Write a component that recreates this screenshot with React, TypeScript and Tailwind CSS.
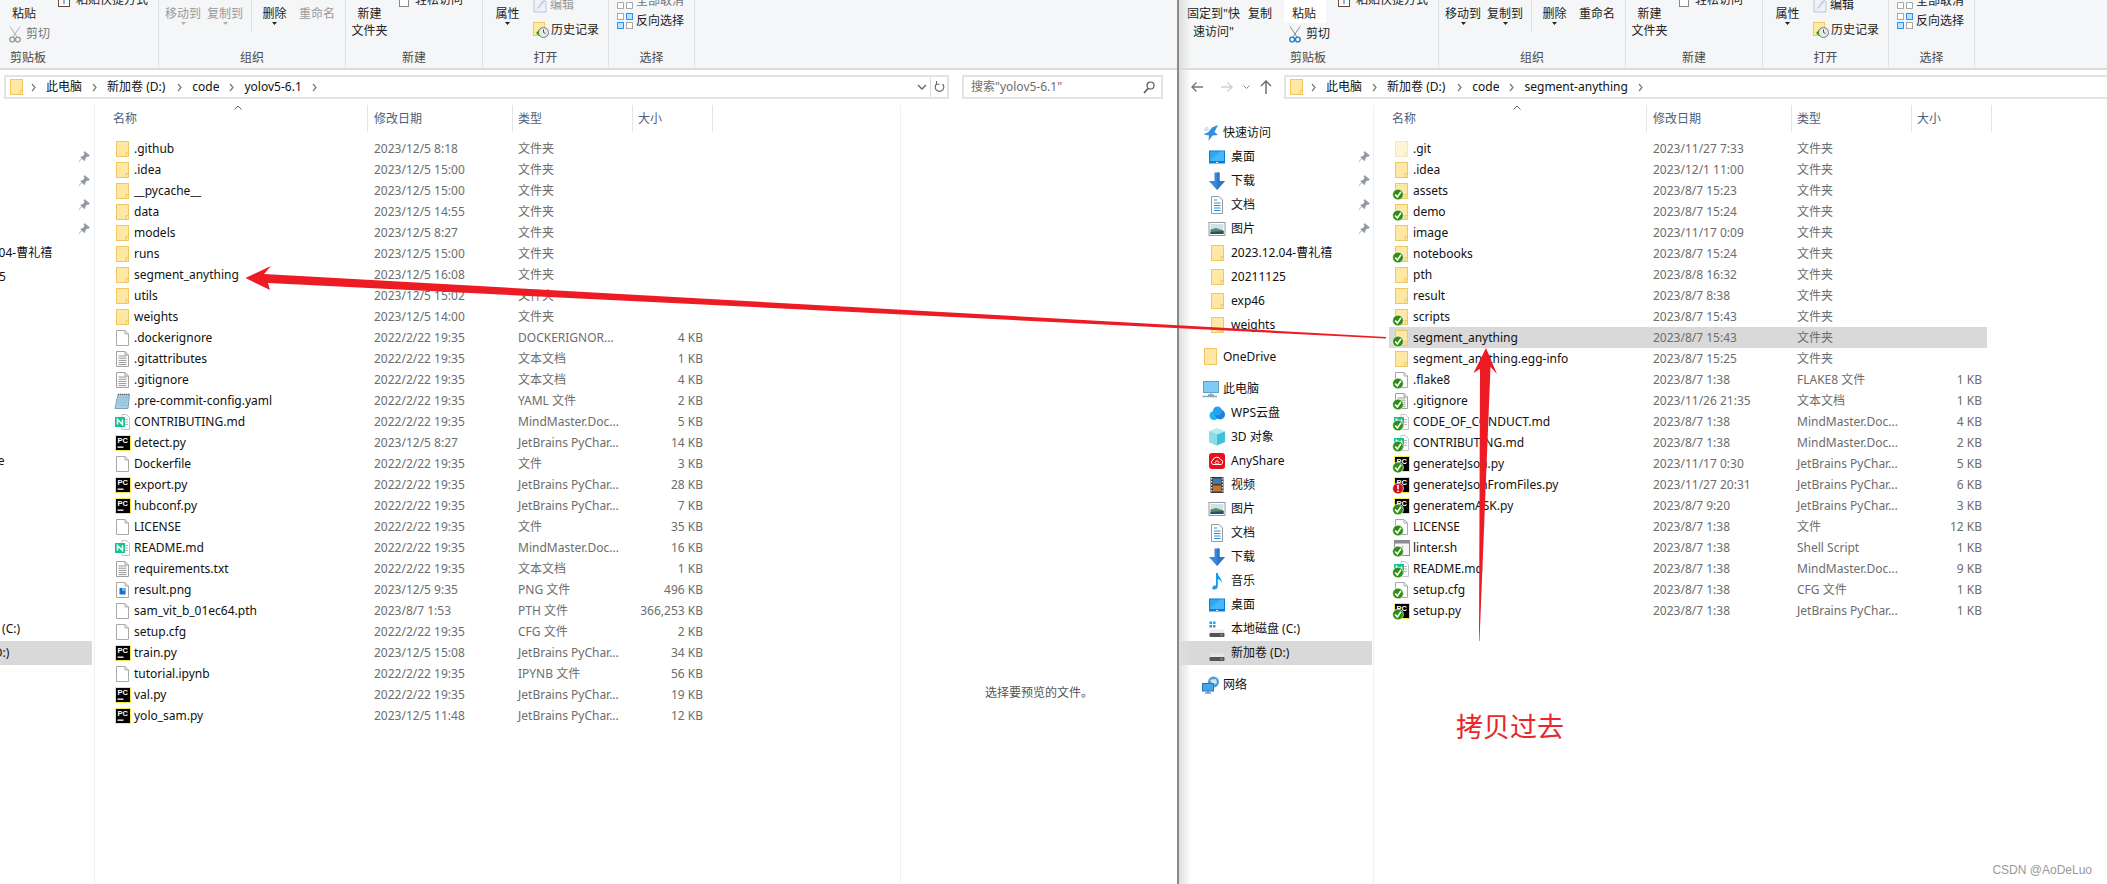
import React from "react";

type Row = { n: string; d: string; t: string; s?: string; i: string; b?: "c" | "x"; sel?: boolean };

const F = "文件夹";
const PY = "JetBrains PyChar...";
const MM = "MindMaster.Doc...";
const TX = "文本文档";

const leftRows: Row[] = [
  { n: ".github", d: "2023/12/5 8:18", t: F, i: "folder" },
  { n: ".idea", d: "2023/12/5 15:00", t: F, i: "folder" },
  { n: "__pycache__", d: "2023/12/5 15:00", t: F, i: "folder" },
  { n: "data", d: "2023/12/5 14:55", t: F, i: "folder" },
  { n: "models", d: "2023/12/5 8:27", t: F, i: "folder" },
  { n: "runs", d: "2023/12/5 15:00", t: F, i: "folder" },
  { n: "segment_anything", d: "2023/12/5 16:08", t: F, i: "folder" },
  { n: "utils", d: "2023/12/5 15:02", t: F, i: "folder" },
  { n: "weights", d: "2023/12/5 14:00", t: F, i: "folder" },
  { n: ".dockerignore", d: "2022/2/22 19:35", t: "DOCKERIGNOR...", s: "4 KB", i: "file" },
  { n: ".gitattributes", d: "2022/2/22 19:35", t: TX, s: "1 KB", i: "text" },
  { n: ".gitignore", d: "2022/2/22 19:35", t: TX, s: "4 KB", i: "text" },
  { n: ".pre-commit-config.yaml", d: "2022/2/22 19:35", t: "YAML 文件", s: "2 KB", i: "yaml" },
  { n: "CONTRIBUTING.md", d: "2022/2/22 19:35", t: MM, s: "5 KB", i: "mm" },
  { n: "detect.py", d: "2023/12/5 8:27", t: PY, s: "14 KB", i: "pc" },
  { n: "Dockerfile", d: "2022/2/22 19:35", t: "文件", s: "3 KB", i: "file" },
  { n: "export.py", d: "2022/2/22 19:35", t: PY, s: "28 KB", i: "pc" },
  { n: "hubconf.py", d: "2022/2/22 19:35", t: PY, s: "7 KB", i: "pc" },
  { n: "LICENSE", d: "2022/2/22 19:35", t: "文件", s: "35 KB", i: "file" },
  { n: "README.md", d: "2022/2/22 19:35", t: MM, s: "16 KB", i: "mm" },
  { n: "requirements.txt", d: "2022/2/22 19:35", t: TX, s: "1 KB", i: "text" },
  { n: "result.png", d: "2023/12/5 9:35", t: "PNG 文件", s: "496 KB", i: "png" },
  { n: "sam_vit_b_01ec64.pth", d: "2023/8/7 1:53", t: "PTH 文件", s: "366,253 KB", i: "file" },
  { n: "setup.cfg", d: "2022/2/22 19:35", t: "CFG 文件", s: "2 KB", i: "file" },
  { n: "train.py", d: "2023/12/5 15:08", t: PY, s: "34 KB", i: "pc" },
  { n: "tutorial.ipynb", d: "2022/2/22 19:35", t: "IPYNB 文件", s: "56 KB", i: "file" },
  { n: "val.py", d: "2022/2/22 19:35", t: PY, s: "19 KB", i: "pc" },
  { n: "yolo_sam.py", d: "2023/12/5 11:48", t: PY, s: "12 KB", i: "pc" },
];

const rightRows: Row[] = [
  { n: ".git", d: "2023/11/27 7:33", t: F, i: "folderfade" },
  { n: ".idea", d: "2023/12/1 11:00", t: F, i: "folder" },
  { n: "assets", d: "2023/8/7 15:23", t: F, i: "folder", b: "c" },
  { n: "demo", d: "2023/8/7 15:24", t: F, i: "folder", b: "c" },
  { n: "image", d: "2023/11/17 0:09", t: F, i: "folder" },
  { n: "notebooks", d: "2023/8/7 15:24", t: F, i: "folder", b: "c" },
  { n: "pth", d: "2023/8/8 16:32", t: F, i: "folder" },
  { n: "result", d: "2023/8/7 8:38", t: F, i: "folder" },
  { n: "scripts", d: "2023/8/7 15:43", t: F, i: "folder", b: "c" },
  { n: "segment_anything", d: "2023/8/7 15:43", t: F, i: "folder", b: "c", sel: true },
  { n: "segment_anything.egg-info", d: "2023/8/7 15:25", t: F, i: "folder" },
  { n: ".flake8", d: "2023/8/7 1:38", t: "FLAKE8 文件", s: "1 KB", i: "file", b: "c" },
  { n: ".gitignore", d: "2023/11/26 21:35", t: TX, s: "1 KB", i: "text", b: "c" },
  { n: "CODE_OF_CONDUCT.md", d: "2023/8/7 1:38", t: MM, s: "4 KB", i: "mm", b: "c" },
  { n: "CONTRIBUTING.md", d: "2023/8/7 1:38", t: MM, s: "2 KB", i: "mm", b: "c" },
  { n: "generateJson.py", d: "2023/11/17 0:30", t: PY, s: "5 KB", i: "pc", b: "c" },
  { n: "generateJsonFromFiles.py", d: "2023/11/27 20:31", t: PY, s: "6 KB", i: "pc", b: "x" },
  { n: "generatemASK.py", d: "2023/8/7 9:20", t: PY, s: "3 KB", i: "pc", b: "c" },
  { n: "LICENSE", d: "2023/8/7 1:38", t: "文件", s: "12 KB", i: "file", b: "c" },
  { n: "linter.sh", d: "2023/8/7 1:38", t: "Shell Script", s: "1 KB", i: "sh", b: "c" },
  { n: "README.md", d: "2023/8/7 1:38", t: MM, s: "9 KB", i: "mm", b: "c" },
  { n: "setup.cfg", d: "2023/8/7 1:38", t: "CFG 文件", s: "1 KB", i: "file", b: "c" },
  { n: "setup.py", d: "2023/8/7 1:38", t: PY, s: "1 KB", i: "pc", b: "c" },
];

const PAGE = "M2.5 1.5H11L14.5 5V16.5H2.5Z M11 1.5V5H14.5";

function FileGlyph({ i }: { i: string }) {
  switch (i) {
    case "folder":
    case "folderfade":
      return (
        <g opacity={i === "folderfade" ? 0.45 : 1}>
          <rect x="2.5" y="1.5" width="12" height="15" fill="#ffe8a3" stroke="#efc862" />
          <path d="M12 16V12.5H14.5" fill="none" stroke="#efc862" />
        </g>
      );
    case "file":
      return <path d={PAGE} fill="#fff" stroke="#a9a9a9" />;
    case "text":
      return (
        <g>
          <path d={PAGE} fill="#fff" stroke="#a0a0a0" />
          <path d="M4.5 6H12.5M4.5 8.2H12.5M4.5 10.4H12.5M4.5 12.6H12.5M4.5 14.6H12.5" stroke="#8a8a8a" strokeWidth="0.9" />
        </g>
      );
    case "yaml":
      return (
        <g>
          <path d="M4 2.5H15.5L14 16.5H1Z" fill="#a8d0e6" stroke="#7f9fb4" />
          <path d="M5 5.5H14M4.7 8H13.7M4.4 10.5H13.4M4.1 13H13.1" stroke="#8bb5cc" strokeWidth="0.8" />
          <path d="M4.5 1.5V3.5M6.5 1.5V3.5M8.5 1.5V3.5M10.5 1.5V3.5M12.5 1.5V3.5M14.5 1.5V3.5" stroke="#666" strokeWidth="0.7" />
        </g>
      );
    case "mm":
      return (
        <g>
          <path d="M8 1.5H12.5L15.5 4.5V16.5H8Z" fill="#fff" stroke="#c5c5c5" />
          <path d="M11 6.5H14M11 9H14M11 11.5H14" stroke="#b5b5b5" />
          <rect x="1" y="4" width="10" height="10" fill="#16c28e" />
          <path d="M3.5 11.5V6.5L8.5 11.5V6.5" fill="none" stroke="#fff" strokeWidth="1.5" />
        </g>
      );
    case "pc":
      return (
        <g>
          <rect x="1.5" y="1.5" width="15" height="15" fill="#000" stroke="#f4ec4e" />
          <text x="3.5" y="9" fontSize="7.5" fontWeight="700" fill="#fff" fontFamily="Liberation Sans, sans-serif">PC</text>
          <rect x="3.5" y="12.5" width="6" height="1.3" fill="#fff" />
        </g>
      );
    case "png":
      return (
        <g>
          <path d={PAGE} fill="#fff" stroke="#a9a9a9" />
          <rect x="5.5" y="7" width="6" height="6.5" fill="#1f6fc0" />
          <rect x="8" y="7" width="3.5" height="3" fill="#69b7ea" />
        </g>
      );
    case "sh":
      return (
        <g>
          <rect x="1.5" y="1.5" width="15" height="15" fill="#f5f5f5" stroke="#8d8d8d" />
          <rect x="1.5" y="1.5" width="15" height="3" fill="#8d8d8d" />
          <path d="M5 8L10 13M10 7L7 13" stroke="#9a9a9a" />
        </g>
      );
  }
  return null;
}

function FileIcon({ i, b }: { i: string; b?: "c" | "x" }) {
  return (
    <svg width="18" height="18" viewBox="0 0 18 18" className="shrink-0 overflow-visible">
      <FileGlyph i={i} />
      {b === "c" && (
        <g>
          <circle cx="5" cy="12.5" r="5.4" fill="#2f8f14" stroke="#fff" strokeWidth="0.7" />
          <path d="M2.2 12.5L4.4 15L8 9.8" fill="none" stroke="#fff" strokeWidth="1.6" />
        </g>
      )}
      {b === "x" && (
        <g>
          <circle cx="5" cy="12.5" r="5.4" fill="#c8141c" stroke="#fff" strokeWidth="0.7" />
          <path d="M5 8.8V13.2M5 14.4V16" stroke="#fff" strokeWidth="1.6" />
        </g>
      )}
    </svg>
  );
}

function NavIcon({ i }: { i: string }) {
  const p = { width: 18, height: 18, viewBox: "0 0 18 18", className: "shrink-0" };
  switch (i) {
    case "star":
      return (
        <svg {...p}>
          <path d="M16 1L12.5 8L16 11L10.5 11.5L6.5 17L7 11.5L1.5 10.5L6.5 8L10 3.5Z" fill="#2f8ee0" />
          <path d="M7 6H2M6 4H3" stroke="#9ccbee" />
        </svg>
      );
    case "desk":
      return (
        <svg {...p}>
          <rect x="1" y="2.5" width="16" height="13" fill="#0a7bd8" />
          <path d="M2 3.5H16V13L2 13Z" fill="#2fa8f5" />
          <path d="M2 13L12 3.5H16V13Z" fill="#45b9fb" />
          <path d="M8 14.5H10" stroke="#fff" />
        </svg>
      );
    case "down":
      return (
        <svg {...p}>
          <path d="M6.5 0.5H11.5V9H17L9 18L1 9H6.5Z" fill="#3a87dc" />
          <path d="M9 0.5H11.5V9H17L9 18Z" fill="#2f76c9" />
        </svg>
      );
    case "doc":
      return (
        <svg {...p}>
          <path d="M3.5 0.5H11L14.5 4V17.5H3.5Z" fill="#fff" stroke="#9a9a9a" />
          <path d="M6 4H9M6 7H12.5M6 9.5H12.5M6 12H12.5M6 14.5H12.5" stroke="#2b8fd6" strokeWidth="1.1" />
        </svg>
      );
    case "pic":
      return (
        <svg {...p}>
          <rect x="1" y="2.5" width="16" height="13" fill="#fff" stroke="#9a9a9a" />
          <rect x="2.5" y="4" width="13" height="10" fill="#cfe3ef" />
          <path d="M2.5 9.5L8 8L15.5 10.5V14H2.5Z" fill="#5d8a68" />
          <path d="M2.5 12L15.5 11V14H2.5Z" fill="#24506b" />
        </svg>
      );
    case "folder":
      return (
        <svg {...p}>
          <rect x="3.5" y="1.5" width="12" height="15" fill="#ffe8a3" stroke="#efc862" />
          <path d="M13 16V12.5H15.5" fill="none" stroke="#efc862" />
        </svg>
      );
    case "one":
      return (
        <svg {...p}>
          <rect x="2.5" y="0.5" width="12" height="16" fill="#ffe8a3" stroke="#efc862" />
        </svg>
      );
    case "pc":
      return (
        <svg {...p}>
          <rect x="1.5" y="1.5" width="15" height="11" fill="#7ecbf5" stroke="#6a9cc0" />
          <path d="M6 15H12M9 13V15M0.5 16.5H15" stroke="#8aa6bb" strokeWidth="1.3" />
        </svg>
      );
    case "wps":
      return (
        <svg {...p}>
          <circle cx="6" cy="11.5" r="4.5" fill="#21b4e8" />
          <circle cx="12" cy="10.5" r="5" fill="#1f7fe0" />
          <circle cx="9.5" cy="7" r="4.5" fill="#25a0ee" />
        </svg>
      );
    case "cube":
      return (
        <svg {...p}>
          <path d="M9 0.5L17 3.5V14L9 17.5L1 14V3.5Z" fill="#42c0d6" />
          <path d="M9 0.5L17 3.5L9 6.5L1 3.5Z" fill="#b4ecf2" />
          <path d="M1 3.5L9 6.5V17.5L1 14Z" fill="#8bdde8" />
        </svg>
      );
    case "any":
      return (
        <svg {...p}>
          <rect x="1" y="1" width="16" height="16" rx="3" fill="#e8101d" />
          <path d="M5 12.5A2.4 2.4 0 0 1 5 8A4 4 0 0 1 12.5 7.5A2.6 2.6 0 0 1 13 12.5ZM7 10.5L9 8.5L11 10.5L9 12.5Z" fill="none" stroke="#fff" strokeWidth="1" />
        </svg>
      );
    case "video":
      return (
        <svg {...p}>
          <rect x="2.5" y="1" width="13" height="16" fill="#3b3b3b" />
          <rect x="5" y="2.5" width="8" height="5.5" fill="#3b7bb0" />
          <rect x="5" y="9.5" width="8" height="6" fill="#c7742b" />
          <path d="M3.7 2V16M14.3 2V16" stroke="#eee" strokeWidth="1.2" strokeDasharray="1.5 1.5" />
        </svg>
      );
    case "music":
      return (
        <svg {...p}>
          <path d="M8 1H9.8C10 5 14.5 6.5 13.5 11C13 8.5 11.5 7.5 9.8 7V14.5C9.8 16.5 7.5 17.8 5.5 17.5C3.8 17.2 3.8 15 5.5 14C6.5 13.4 7.4 13.4 8 13.7Z" fill="#0e9cf0" />
        </svg>
      );
    case "c":
      return (
        <svg {...p}>
          <path d="M1.5 1.5H4V4H1.5ZM5 1.5H7.5V4H5ZM1.5 5H4V7.5H1.5ZM5 5H7.5V7.5H5Z" fill="#19a0f2" />
          <path d="M3 9.5H15L16.5 13H1.5Z" fill="#ececec" />
          <rect x="1.5" y="13" width="15" height="4" rx="1" fill="#555" />
          <rect x="12.5" y="14.3" width="2" height="1.2" fill="#5fe05f" />
        </svg>
      );
    case "d":
      return (
        <svg {...p}>
          <path d="M3 9.5H15L16.5 13H1.5Z" fill="#e6e6e6" />
          <rect x="1.5" y="13" width="15" height="4" rx="1" fill="#555" />
          <rect x="12.5" y="14.3" width="2" height="1.2" fill="#5fe05f" />
        </svg>
      );
    case "net":
      return (
        <svg {...p}>
          <circle cx="11.5" cy="6" r="5.5" fill="#4d9ed8" />
          <path d="M8 4C10 2.5 12 4 14 3L15 7L11 9Z" fill="#cfe3f0" />
          <rect x="0.5" y="7.5" width="11" height="7.5" fill="#49a5e6" stroke="#2878b8" />
          <path d="M3 17H9M6 15V17" stroke="#2878b8" />
        </svg>
      );
  }
  return null;
}

function Pin() {
  return (
    <svg width="12" height="12" viewBox="0 0 12 12" className="shrink-0">
      <path d="M6.5 0.5L11.5 4.5L10 5.5L8.7 5L6.8 8.2L6.5 9.8L2.7 6.3L4.4 5.6L7 3.3L6 1.8Z M3.6 7.5L0.8 11" fill="#8e98a3" stroke="#8e98a3" strokeWidth="0.7" />
    </svg>
  );
}

function NavRow({ icon, text, lvl, pin, cls = "", sel }: { icon: string; text: string; lvl: 1 | 2; pin?: boolean; cls?: string; sel?: boolean }) {
  return (
    <div className={`flex h-[24px] w-[194px] items-center whitespace-nowrap ${lvl === 1 ? "pl-[24px] gap-[3px]" : "pl-[30px] gap-[5px]"} ${sel ? "bg-[#d9d9d9]" : ""} ${cls}`}>
      <NavIcon i={icon} />
      <span>{text}</span>
      {pin && (
        <span className="ml-auto flex pr-[2px]">
          <Pin />
        </span>
      )}
    </div>
  );
}

function Sidebar() {
  return (
    <div className="flex w-[196px] shrink-0 flex-col pt-[16px] text-[#111]">
      <NavRow icon="star" text="快速访问" lvl={1} />
      <NavRow icon="desk" text="桌面" lvl={2} pin />
      <NavRow icon="down" text="下载" lvl={2} pin />
      <NavRow icon="doc" text="文档" lvl={2} pin />
      <NavRow icon="pic" text="图片" lvl={2} pin />
      <NavRow icon="folder" text="2023.12.04-曹礼禧" lvl={2} />
      <NavRow icon="folder" text="20211125" lvl={2} />
      <NavRow icon="folder" text="exp46" lvl={2} />
      <NavRow icon="folder" text="weights" lvl={2} />
      <NavRow icon="one" text="OneDrive" lvl={1} cls="mt-[8px]" />
      <NavRow icon="pc" text="此电脑" lvl={1} cls="mt-[8px]" />
      <NavRow icon="wps" text="WPS云盘" lvl={2} />
      <NavRow icon="cube" text="3D 对象" lvl={2} />
      <NavRow icon="any" text="AnyShare" lvl={2} />
      <NavRow icon="video" text="视频" lvl={2} />
      <NavRow icon="pic" text="图片" lvl={2} />
      <NavRow icon="doc" text="文档" lvl={2} />
      <NavRow icon="down" text="下载" lvl={2} />
      <NavRow icon="music" text="音乐" lvl={2} />
      <NavRow icon="desk" text="桌面" lvl={2} />
      <NavRow icon="c" text="本地磁盘 (C:)" lvl={2} />
      <NavRow icon="d" text="新加卷 (D:)" lvl={2} sel />
      <NavRow icon="net" text="网络" lvl={1} cls="mt-[8px]" />
    </div>
  );
}

function Chevron() {
  return (
    <svg width="5" height="9" viewBox="0 0 5 9" className="mx-[10px] shrink-0">
      <path d="M1 1L4 4.5L1 8" fill="none" stroke="#7a7a7a" strokeWidth="1.2" />
    </svg>
  );
}

function Crumbs({ last }: { last: string }) {
  return (
    <div className="flex h-full items-center whitespace-nowrap pl-[2px] text-[#111]">
      <svg width="18" height="18" viewBox="0 0 18 18" className="mr-[-5px] shrink-0">
        <rect x="2.5" y="1.5" width="12" height="15" fill="#ffe8a3" stroke="#efc862" />
        <path d="M12 16V12.5H14.5" fill="none" stroke="#efc862" />
      </svg>
      <Chevron />
      <span>此电脑</span>
      <Chevron />
      <span className="mr-[2px]">新加卷 (D:)</span>
      <Chevron />
      <span>code</span>
      <Chevron />
      <span>{last}</span>
      <Chevron />
    </div>
  );
}

function Arrow({ up }: { up?: boolean }) {
  return (
    <svg width="5" height="3" viewBox="0 0 5 3" className="block">
      <path d="M0 0H5L2.5 3Z" fill={up ? "#b0b0b0" : "#222"} />
    </svg>
  );
}

function TopBtn({ t, dim, arrow, w }: { t: string; dim: boolean; arrow?: boolean; w: string }) {
  return (
    <div className={`flex flex-col items-center pt-[5px] ${w} ${dim ? "text-[#9a9a9a]" : "text-[#222]"}`}>
      <span className="leading-[18px] whitespace-nowrap">{t}</span>
      {arrow && (
        <span className="mt-[-1px]">
          <Arrow up={dim} />
        </span>
      )}
    </div>
  );
}

function Group({ w, label, labelCls = "text-center", children }: { w: string; label: string; labelCls?: string; children: React.ReactNode }) {
  return (
    <div className={`flex h-[67px] shrink-0 flex-col border-r border-[#dfe0e1] ${w}`}>
      <div className="h-[49px] overflow-hidden">{children}</div>
      <div className={`h-[18px] leading-[18px] text-[#4a4a4a] ${labelCls}`}>{label}</div>
    </div>
  );
}

function Ribbon({ active }: { active: boolean }) {
  const dim = !active;
  return (
    <div className="flex h-[70px] shrink-0 overflow-hidden border-b-2 border-[#dadbdc] bg-[#f5f6f7] text-[#222]">
      {active && (
        <div className="flex h-[66px] w-[101px] shrink-0 pt-[5px]">
          <div className="w-[69px] shrink-0 text-center leading-[18px]">
            <div className="whitespace-nowrap">固定到"快</div>
            <div className="whitespace-nowrap">速访问"</div>
          </div>
          <div className="leading-[18px] whitespace-nowrap">复制</div>
        </div>
      )}
      <Group w="w-[159px]" label="剪贴板" labelCls="pl-[10px]">
        <div className="flex h-full">
          <div className="ml-[4px] flex w-[54px] shrink-0 flex-col">
            <div className={`h-[23px] w-[42px] pl-[8px] pt-[5px] leading-[18px] ${active ? "bg-white" : ""}`}>粘贴</div>
            <div className={`flex h-[22px] items-center gap-[5px] pl-[5px] ${dim ? "text-[#777]" : ""}`}>
              <svg width="12" height="17" viewBox="0 0 12 17" className="shrink-0">
                <path d="M1 0.5L8 11M11 0.5L4 11" stroke={active ? "#8a8a8a" : "#b0b0b0"} strokeWidth="1" />
                <circle cx="3.2" cy="13.5" r="2.4" fill="none" stroke={active ? "#1a82d0" : "#9a9a9a"} strokeWidth="1.4" />
                <circle cx="8.8" cy="13.5" r="2.4" fill="none" stroke={active ? "#1a82d0" : "#9a9a9a"} strokeWidth="1.4" />
              </svg>
              <span className="whitespace-nowrap">剪切</span>
            </div>
          </div>
          <div className="mt-[-9px] flex h-[18px] items-center gap-[6px] whitespace-nowrap leading-[18px]">
            <svg width="12" height="14" viewBox="0 0 12 14" className="shrink-0">
              <rect x="0.5" y="0.5" width="11" height="13" fill="#fff" stroke="#6a4a3a" />
              <path d="M6 11V5M4 7L6 5L8 7" fill="none" stroke="#1a6fc0" />
            </svg>
            <span>粘贴快捷方式</span>
          </div>
        </div>
      </Group>
      <Group w="w-[187px]" label="组织">
        <div className="flex pl-[6px]">
          <TopBtn t="移动到" dim={dim} arrow w="w-[36px]" />
          <TopBtn t="复制到" dim={dim} arrow w="ml-[6px] w-[36px]" />
          <div className="ml-[8px] h-[32px] w-px bg-[#dfe0e1]" />
          <TopBtn t="删除" dim={false} arrow w="ml-[10px] w-[25px]" />
          <TopBtn t="重命名" dim={dim} w="ml-[12px] w-[36px]" />
        </div>
      </Group>
      <Group w="w-[137px]" label="新建">
        <div className="flex pl-[5px]">
          <div className="w-[37px] pt-[5px] text-center leading-[17px]">
            <div>新建</div>
            <div className="whitespace-nowrap">文件夹</div>
          </div>
          <div className="ml-[11px] mt-[-9px] flex h-[18px] items-center gap-[6px] whitespace-nowrap">
            <span className="h-[13px] w-[10px] shrink-0 border border-[#8a8a8a] bg-white" />
            <span>轻松访问</span>
          </div>
        </div>
      </Group>
      <Group w="w-[126px]" label="打开">
        <div className="flex pl-[12px]">
          <TopBtn t="属性" dim={false} arrow w="w-[25px]" />
          <div className="ml-[13px] flex flex-col">
            <div className={`mt-[-4px] flex h-[18px] items-center gap-[3px] whitespace-nowrap ${dim ? "text-[#9a9a9a]" : ""}`}>
              <svg width="14" height="16" viewBox="0 0 14 16" className="shrink-0">
                <path d="M1 1H9L13 5V15H1Z" fill="#eef2f8" stroke="#b9c6da" />
                <path d="M4 11L10 3L11.5 4.5L5.5 12Z" fill="#c3cfe2" />
              </svg>
              <span>编辑</span>
            </div>
            <div className="mt-[7px] flex h-[18px] items-center gap-[2px] whitespace-nowrap">
              <svg width="16" height="16" viewBox="0 0 16 16" className="shrink-0">
                <rect x="0.5" y="0.5" width="11" height="13" fill="#ffe8a3" stroke="#efc862" />
                <circle cx="10.5" cy="10.5" r="5" fill="#e8e8e8" stroke="#777" />
                <path d="M10.5 7.5V10.5L12.5 11.5" fill="none" stroke="#555" />
                <path d="M3 11L6 8L6 14Z" fill="#2f9a18" />
              </svg>
              <span>历史记录</span>
            </div>
          </div>
        </div>
      </Group>
      <Group w="w-[86px]" label="选择">
        <div className="flex flex-col pl-[8px]">
          <div className={`mt-[-8px] flex h-[18px] items-center gap-[3px] whitespace-nowrap ${dim ? "text-[#777]" : ""}`}>
            <svg width="16" height="16" viewBox="0 0 16 16" className="shrink-0">
              <path d="M0.5 0.5H6.5V6.5H0.5ZM9.5 0.5H15.5V6.5H9.5ZM0.5 9.5H6.5V15.5H0.5ZM9.5 9.5H15.5V15.5H9.5Z" fill="#fff" stroke="#a8a8a8" />
            </svg>
            <span>全部取消</span>
          </div>
          <div className="mt-[2px] flex h-[18px] items-center gap-[3px] whitespace-nowrap">
            <svg width="16" height="16" viewBox="0 0 16 16" className="shrink-0">
              <rect x="9.5" y="0.5" width="6" height="6" fill="#bfe0fb" stroke="#2b95e9" />
              <rect x="0.5" y="9.5" width="6" height="6" fill="#bfe0fb" stroke="#2b95e9" />
              <rect x="0.5" y="0.5" width="6" height="6" fill="#fff" stroke="#a8a8a8" />
              <rect x="9.5" y="9.5" width="6" height="6" fill="#fff" stroke="#a8a8a8" />
            </svg>
            <span>反向选择</span>
          </div>
        </div>
      </Group>
    </div>
  );
}

function Header() {
  return (
    <div className="ml-[15px] flex h-[27px] shrink-0 items-center text-[#4c607a]">
      <div className="relative flex h-full w-[258px] shrink-0 items-center border-r border-[#e5e5e5] pl-[3px]">
        名称
        <svg width="8" height="5" viewBox="0 0 8 5" className="absolute left-[124px] top-0">
          <path d="M0.5 4.5L4 1L7.5 4.5" fill="none" stroke="#666" />
        </svg>
      </div>
      <div className="flex h-full w-[145px] shrink-0 items-center border-r border-[#e5e5e5] pl-[6px]">修改日期</div>
      <div className="flex h-full w-[120px] shrink-0 items-center border-r border-[#e5e5e5] pl-[5px]">类型</div>
      <div className="flex h-full w-[80px] shrink-0 items-center border-r border-[#e5e5e5] pl-[5px]">大小</div>
    </div>
  );
}

function Rows({ rows }: { rows: Row[] }) {
  return (
    <div className="mt-[6px] flex flex-col">
      {rows.map((r) => (
        <div key={r.n} className={`ml-[15px] flex h-[21px] w-[598px] items-center pl-[4px] pr-[5px] whitespace-nowrap ${r.sel ? "bg-[#d9d9d9]" : ""}`}>
          <FileIcon i={r.i} b={r.b} />
          <span className="ml-[2px] w-[240px] shrink-0 text-[#111]">{r.n}</span>
          <span className="w-[144px] shrink-0 text-[#6d6d6d]">{r.d}</span>
          <span className="w-[120px] shrink-0 text-[#6d6d6d]">{r.t}</span>
          <span className="w-[65px] shrink-0 text-right text-[#6d6d6d]">{r.s}</span>
        </div>
      ))}
    </div>
  );
}

export default function App() {
  return (
    <div className="relative flex h-[884px] w-[2107px] overflow-hidden bg-white font-['Noto_Sans','Noto_Sans_CJK_SC',sans-serif] text-[12px] leading-[18px]">
      <div className="flex w-[1177px] shrink-0 flex-col">
        <Ribbon active={false} />
        <div className="flex h-[35px] shrink-0 items-start pl-[4px] pr-[14px] pt-[5px]">
          <div className="flex h-[24px] w-[945px] shrink-0 items-center border-2 border-[#e3e3e3]">
            <Crumbs last="yolov5-6.1" />
            <div className="ml-auto flex h-full items-center">
              <svg width="10" height="6" viewBox="0 0 10 6" className="mr-[3px]">
                <path d="M1 1L5 5L9 1" fill="none" stroke="#666" strokeWidth="1.4" />
              </svg>
              <div className="flex h-full w-[17px] items-center justify-center border-l border-[#dcdcdc] text-[#666]">
                <svg width="11" height="14" viewBox="0 0 11 14">
                  <path d="M8.5 4A4.3 4.3 0 1 1 2.5 4M2.5 1V4.3H5.5" fill="none" stroke="#666" strokeWidth="1.1" />
                </svg>
              </div>
            </div>
          </div>
          <div className="ml-[13px] flex h-[24px] w-[201px] shrink-0 items-center justify-between border-2 border-[#e3e3e3] pl-[7px] pr-[6px] text-[#6d6d6d]">
            <span>搜索"yolov5-6.1"</span>
            <svg width="12" height="13" viewBox="0 0 12 13">
              <circle cx="7.5" cy="4.5" r="3.5" fill="none" stroke="#555" strokeWidth="1.2" />
              <path d="M5 7.5L1 12" stroke="#555" strokeWidth="1.6" />
            </svg>
          </div>
        </div>
        <div className="flex min-h-0 flex-1">
          <div className="flex w-[95px] shrink-0 justify-end overflow-hidden border-r border-[#f0f0f0]">
            <Sidebar />
          </div>
          <div className="w-[805px] shrink-0">
            <Header />
            <Rows rows={leftRows} />
          </div>
          <div className="flex flex-1 items-start justify-center border-l border-[#f0f0f0] pt-[579px] text-[#555]">
            选择要预览的文件。
          </div>
        </div>
      </div>

      <div className="relative flex min-w-0 flex-1 flex-col border-l-2 border-[#8a8a8a]">
        <div className="absolute left-0 top-0 h-full w-[12px] bg-gradient-to-r from-[#dedede] to-transparent" />
        <Ribbon active />
        <div className="flex h-[35px] shrink-0 items-start pt-[5px]">
          <div className="flex h-[24px] w-[105px] shrink-0 items-center">
            <svg width="14" height="12" viewBox="0 0 14 12" className="ml-[11px]">
              <path d="M13 6H2M6.5 1.5L2 6L6.5 10.5" fill="none" stroke="#777" strokeWidth="1.4" />
            </svg>
            <svg width="14" height="12" viewBox="0 0 14 12" className="ml-[16px]">
              <path d="M1 6H12M7.5 1.5L12 6L7.5 10.5" fill="none" stroke="#d0d0d0" strokeWidth="1.4" />
            </svg>
            <svg width="7" height="5" viewBox="0 0 7 5" className="ml-[9px]">
              <path d="M0.5 0.5L3.5 3.5L6.5 0.5" fill="none" stroke="#888" />
            </svg>
            <svg width="12" height="16" viewBox="0 0 12 16" className="ml-[10px]">
              <path d="M6 15V2M1 7L6 2L11 7" fill="none" stroke="#666" strokeWidth="1.4" />
            </svg>
          </div>
          <div className="h-[24px] flex-1 border-y-2 border-l-2 border-[#e3e3e3]">
            <Crumbs last="segment-anything" />
          </div>
        </div>
        <div className="flex min-h-0 flex-1">
          <div className="w-[195px] shrink-0 overflow-hidden border-r border-[#f0f0f0]">
            <div className="ml-[-1px]">
              <Sidebar />
            </div>
          </div>
          <div className="flex-1">
            <Header />
            <Rows rows={rightRows} />
          </div>
        </div>
      </div>

      <svg width="2107" height="884" viewBox="0 0 2107 884" className="pointer-events-none absolute left-0 top-0">
        <polygon points="245.5,278 271,266 264,274 1386,337 1386,338.5 268,283 270,290" fill="#ed1c24" />
        <polygon points="1486,348 1497,374 1490.5,367 1479.5,641 1479,641 1480,369 1473.5,373" fill="#ed1c24" />
      </svg>
      <div className="absolute left-[1456px] top-[709px] text-[27px] leading-[36px] text-[#e8262c]">拷贝过去</div>
      <div className="absolute right-[15px] top-[861px] font-['Liberation_Sans',sans-serif] text-[12px] leading-[18px] text-[#999]">CSDN @AoDeLuo</div>
    </div>
  );
}
